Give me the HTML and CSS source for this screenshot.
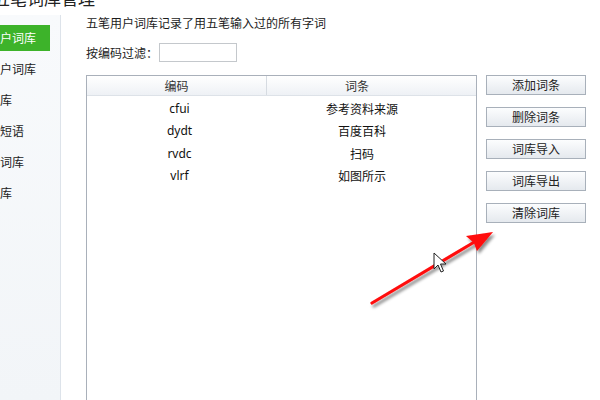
FILE: index.html
```html
<!DOCTYPE html>
<html lang="zh-CN">
<head>
<meta charset="utf-8">
<link rel="stylesheet" href="styles.css">
</head>
<body>
<div class="app">
  <div class="titlebar"><div class="title">五笔词库管理</div></div>
  <div class="body">
    <nav class="sidebar">
      <div class="item active">五笔用户词库</div>
      <div class="item">拼音用户词库</div>
      <div class="item">系统词库</div>
      <div class="item">自定义短语</div>
      <div class="item">五笔小词库</div>
      <div class="item">英文词库</div>
    </nav>
    <main class="main">
      <div class="desc">五笔用户词库记录了用五笔输入过的所有字词</div>
      <div class="filter">
        <label>按编码过滤：</label>
        <span class="input"></span>
      </div>
      <div class="content">
        <div class="table">
          <div class="thead">
            <div class="th c1">编码</div>
            <div class="th c2">词条</div>
          </div>
          <div class="row"><div class="td c1">cfui</div><div class="td c2">参考资料来源</div></div>
          <div class="row"><div class="td c1">dydt</div><div class="td c2">百度百科</div></div>
          <div class="row"><div class="td c1">rvdc</div><div class="td c2">扫码</div></div>
          <div class="row"><div class="td c1">vlrf</div><div class="td c2">如图所示</div></div>
        </div>
        <div class="buttons">
          <div class="btn">添加词条</div>
          <div class="btn">删除词条</div>
          <div class="btn">词库导入</div>
          <div class="btn">词库导出</div>
          <div class="btn">清除词库</div>
        </div>
      </div>
    </main>
  </div>
  <svg class="overlay" width="600" height="400" viewBox="0 0 600 400">
    <defs>
      <filter id="sh" x="-20%" y="-20%" width="140%" height="140%">
        <feDropShadow dx="2" dy="3" stdDeviation="1.6" flood-color="#000" flood-opacity="0.45"/>
      </filter>
    </defs>
    <g filter="url(#sh)">
      <path d="M372 303 L476 241" stroke="#ff0a0a" stroke-width="3.2" stroke-linecap="round" fill="none"/>
      <path d="M466 236 L493 232 L477 251 L474 243 Z" fill="#ff0a0a"/>
    </g>
    <path d="M434 253 L434 269 L438 265 L441 272 L443.5 271 L440.5 264 L446 264 Z" fill="#fff" stroke="#222" stroke-width="1" stroke-linejoin="round"/>
  </svg>
</div>
</body>
</html>
```
FILE: styles.css
```css
html, body {
  margin: 0;
  padding: 0;
}
body {
  width: 600px;
  height: 400px;
  overflow: hidden;
  background: #fff;
  font-family: "Noto Sans", "Noto Sans CJK SC", sans-serif;
  font-size: 12px;
  color: #1c1c1c;
}
.app {
  position: relative;
  width: 600px;
  height: 400px;
  display: flex;
  flex-direction: column;
}
.titlebar {
  height: 15px;
  flex: none;
}
.title {
  font-family: "Noto Sans CJK SC", sans-serif;
  font-size: 17px;
  line-height: 20px;
  margin-top: -12px;
  margin-left: -7px;
  color: #222;
  white-space: nowrap;
}
.body {
  flex: 1;
  display: flex;
  min-height: 0;
}
.sidebar {
  width: 60px;
  flex: none;
  border-right: 1px solid #dde3ea;
  background: linear-gradient(#f8fafc, #f2f5f8);
  padding-top: 10px;
  display: flex;
  flex-direction: column;
  gap: 5px;
  overflow: hidden;
}
.item {
  height: 26px;
  line-height: 26px;
  width: 50px;
  white-space: nowrap;
  text-indent: -36px;
  font-family: "Noto Sans CJK SC", sans-serif;
  font-size: 12px;
  color: #222;
}
.item.active {
  background: #3db32a;
  color: #fff;
}
.main {
  flex: 1;
  padding-left: 25px;
  display: flex;
  flex-direction: column;
  min-width: 0;
}
.desc {
  line-height: 16px;
  font-family: "Noto Sans CJK SC", sans-serif;
}
.filter {
  margin-top: 12px;
  height: 18px;
  display: flex;
  align-items: center;
  font-family: "Noto Sans CJK SC", sans-serif;
}
.filter label {
  width: 73px;
}
.input {
  width: 76px;
  height: 17px;
  border: 1px solid #c4c8cc;
  background: #fff;
}
.content {
  margin-top: 14px;
  display: flex;
  gap: 9px;
  align-items: flex-start;
}
.table {
  width: 389px;
  height: 340px;
  border: 1px solid #a9b0ba;
  flex: none;
  padding-bottom: 0;
}
.thead {
  height: 19px;
  border-bottom: 1px solid #dde2e8;
  background: linear-gradient(#ffffff, #eef1f5);
  display: flex;
  align-items: center;
}
.th {
  line-height: 19px;
  text-align: center;
  font-family: "Noto Sans CJK SC", sans-serif;
  color: #333;
}
.thead .c1 {
  width: 179px;
  border-right: 1px solid #d6dbe1;
  line-height: 13px;
  padding: 3px 0;
}
.thead .c2 {
  width: 180px;
}
.row {
  display: flex;
  height: 22.5px;
  align-items: center;
}
.row:first-of-type {
  margin-top: 1px;
}
.thead + .row {
  margin-top: 1px;
}
.td {
  text-align: center;
  padding-left: 5px;
  box-sizing: border-box;
  font-family: "Noto Sans", "Noto Sans CJK SC", sans-serif;
  color: #111;
}
.row .c1 {
  width: 180px;
}
.row .c2 {
  width: 185px;
  font-family: "Noto Sans CJK SC", sans-serif;
}
.buttons {
  display: flex;
  flex-direction: column;
  gap: 12px;
}
.btn {
  width: 98px;
  height: 18px;
  line-height: 18px;
  border: 1px solid #a8b0ba;
  background: linear-gradient(#fcfdfe, #e5e9ee);
  text-align: center;
  font-family: "Noto Sans CJK SC", sans-serif;
  color: #222;
}
.overlay {
  position: absolute;
  left: 0;
  top: 0;
  pointer-events: none;
}
```
